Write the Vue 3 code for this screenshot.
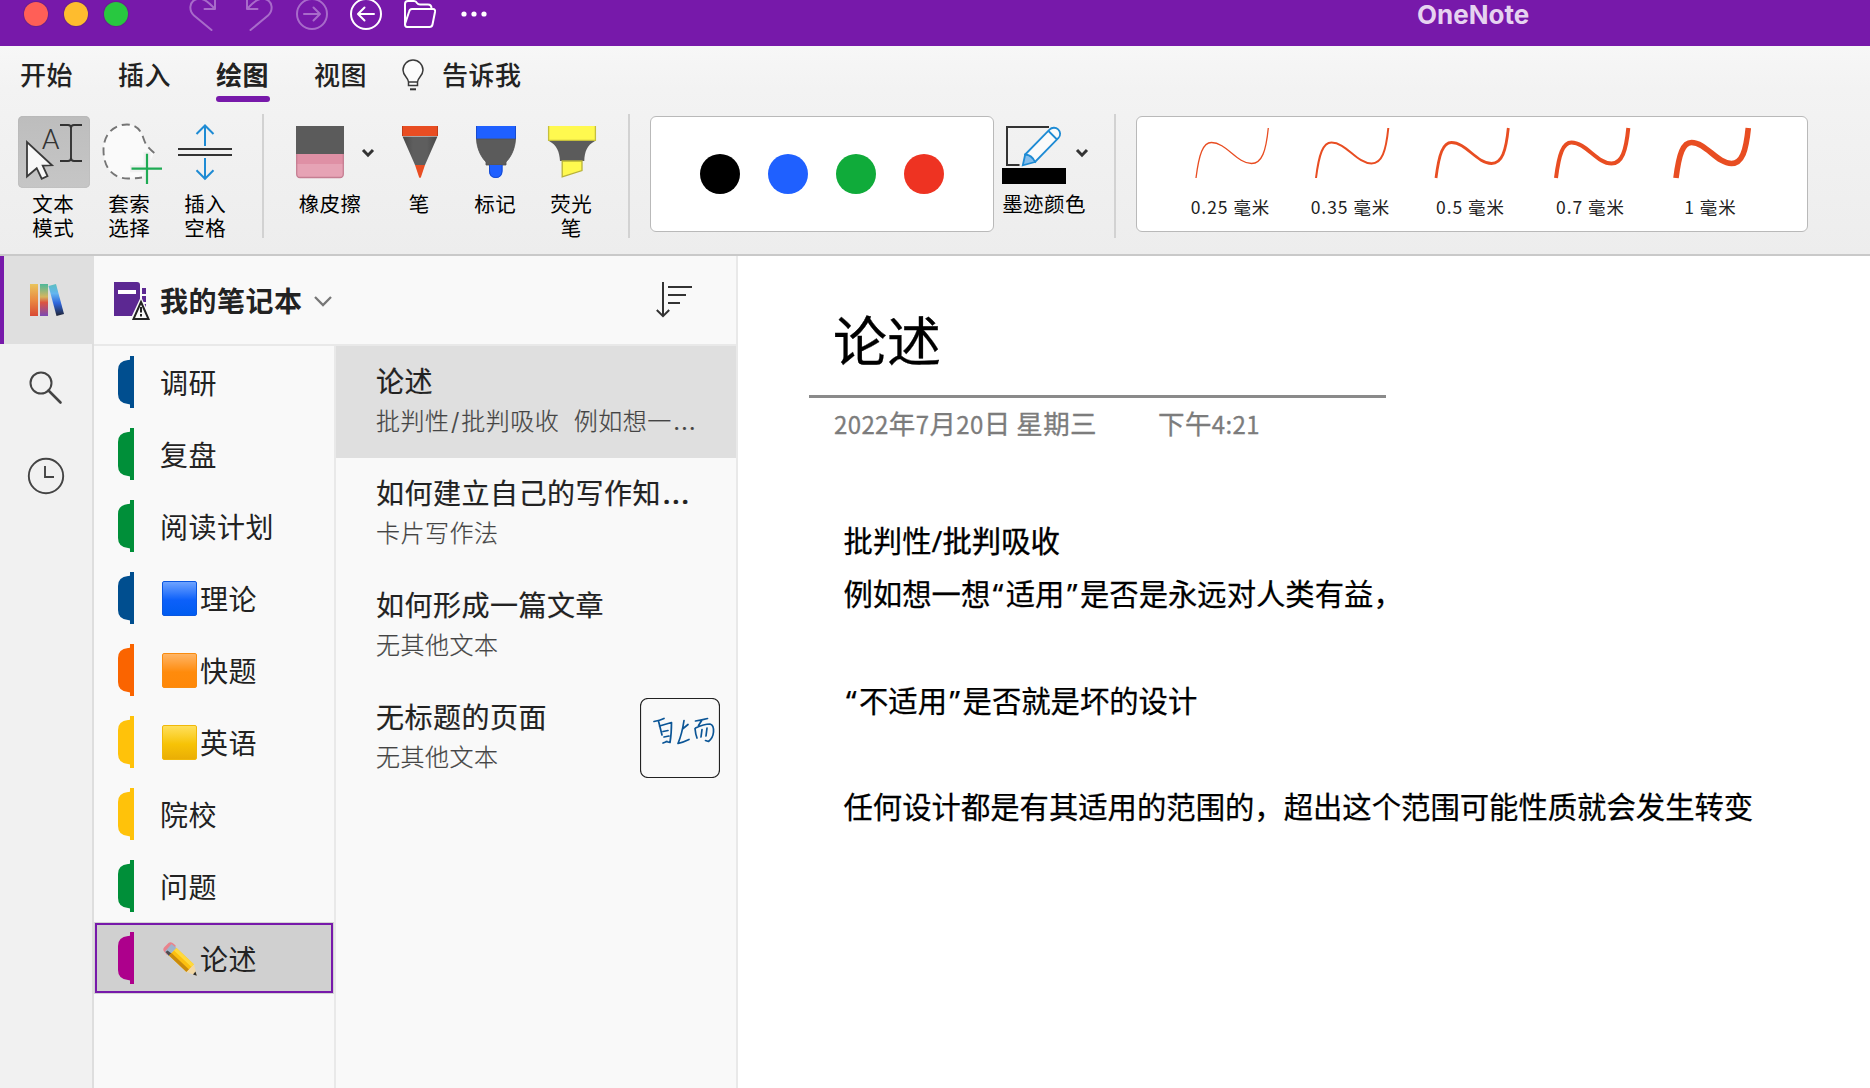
<script setup>
const tabs = ['开始', '插入', '绘图', '视图']
const activeTab = '绘图'

const inks = ['#000000', '#1f60ff', '#10ab3a', '#ee3322']

const strokes = [
  { label: '0.25 毫米', width: 1.3 },
  { label: '0.35 毫米', width: 2 },
  { label: '0.5 毫米', width: 2.8 },
  { label: '0.7 毫米', width: 4 },
  { label: '1 毫米', width: 5.6 },
]

const sections = [
  { name: '调研', color: '#004e8f' },
  { name: '复盘', color: '#008f39' },
  { name: '阅读计划', color: '#008f39' },
  { name: '理论', color: '#004e8f', square: 'blue' },
  { name: '快题', color: '#fa6400', square: 'orange' },
  { name: '英语', color: '#ffc20a', square: 'yellow' },
  { name: '院校', color: '#ffc20a' },
  { name: '问题', color: '#008f39' },
  { name: '论述', color: '#ad008c', pencil: true, active: true },
]

const pages = [
  { title: '论述', text: '批判性/批判吸收\u00a0 例如想一…', active: true },
  { title: '如何建立自己的写作知…', text: '卡片写作法' },
  { title: '如何形成一篇文章', text: '无其他文本' },
  { title: '无标题的页面', text: '无其他文本', thumb: true },
]

// Splits a line so that slashes and ellipses can be spaced on their own.
const parts = (s) => s.split(/([/…])/).filter(Boolean)
const markClass = (s) => ({ slash: s === '/', dots3: s === '…' })
</script>

<template>
  <div class="app">
    <header class="titlebar">
      <i class="light red"></i><i class="light amber"></i><i class="light green"></i>
      <svg class="redo dim" width="32" height="46" viewBox="186 0 32 46">
        <path d="M211.500 30L194 15.500C188.500 10.500 189.500 2 195.500 -.500C202 -3 207 .500 215 9M215 -4V9H204.500" />
      </svg>
      <svg class="undo dim" width="32" height="46" viewBox="244 0 32 46">
        <path d="M250.500 30L268 15.500C273.500 10.500 272.500 2 266.500 -.500C260 -3 255 .500 247 9M247 -4V9H257.500" />
      </svg>
      <svg class="fwd dim" width="32" height="46" viewBox="296 0 32 46">
        <circle cx="312" cy="14" r="15" /><path d="M304 14H319M313.500 7.500L320 14L313.500 20.500" />
      </svg>
      <svg class="back" width="32" height="46" viewBox="350 0 32 46">
        <circle cx="366" cy="14" r="15" /><path d="M374 14H359M364.500 7.500L358 14L364.500 20.500" />
      </svg>
      <svg class="folder" width="36" height="46" viewBox="402 0 36 46">
        <path d="M405 25V4Q405 1 408 1H414Q416 1 417 3Q418 4.500 420 4.500H428Q431.500 4.500 431.500 8.500M407 27Q405 27 405 24L409 12Q409.500 9 412 9H433Q435.500 9 435 12L432.500 24.500Q432 27 429.500 27Z" />
      </svg>
      <svg class="dots" width="28" height="46" viewBox="460 0 28 46">
        <circle cx="464" cy="14" r="2.600" /><circle cx="474" cy="14" r="2.600" /><circle cx="484" cy="14" r="2.600" />
      </svg>
      <span class="app-name">OneNote</span>
    </header>

    <div class="ribbon">
      <nav class="tabs">
        <span v-for="t in tabs" :key="t" class="tab" :class="{ on: t === activeTab }">{{ t }}</span>
        <svg class="bulb" width="24" height="34" viewBox="0 0 24 34">
          <path d="M7.500 23C7.500 18.500 2 17 2 11A10 10 0 0 1 22 11C22 17 16.500 18.500 16.500 23V26.500H7.500ZM7.500 23H16.500" fill="#fcfcfc" stroke="#3a3a3a" stroke-width="1.500" />
          <path d="M9 30.300H15" stroke="#333" stroke-width="2" />
        </svg>
        <span class="tab tell">告诉我</span>
      </nav>

      <div class="tools">
        <div class="tool pressed">
          <svg width="72" height="72" viewBox="0 0 72 72">
            <path d="M9 26V60.500L18.700 52.200L23.700 62.700L29.500 60L24.700 49.700L34 49.300Z" fill="#f8f8f8" stroke="#3a3a3a" stroke-width="1.800" />
            <text x="32.700" y="33" text-anchor="middle" class="glyph-a">A</text>
            <path d="M42 9H50Q53 9 53 12Q53 9 56 9H64M42 45H50Q53 45 53 42Q53 45 56 45H64M53 10V44" fill="none" stroke="#333" stroke-width="1.900" />
          </svg>
          <span class="label">文本<br />模式</span>
        </div>
        <div class="tool">
          <svg width="72" height="72" viewBox="0 0 72 72">
            <path d="M60.300 37C52 30 51 27 49 21C46 12 40 8.500 33 8.500C18 8.500 9.500 20 9.500 34C9.500 52 19 62.500 34 62.500Q41 62.500 48 61.500" fill="#fafafa" stroke="#757575" stroke-width="1.900" stroke-dasharray="8 5" />
            <path d="M53 36V70M36 52.700H70" stroke="#f0f0f0" stroke-width="7" />
            <path d="M53 37.700V68M37.500 52.700H68" stroke="#1fab54" stroke-width="2.200" />
          </svg>
          <span class="label">套索<br />选择</span>
        </div>
        <div class="tool">
          <svg width="72" height="72" viewBox="0 0 72 72" fill="none">
            <path d="M8 33H62M8 39H62" stroke="#333" stroke-width="2" />
            <path d="M35 30V9M26.500 18L35 9.500L43.500 18M35 42V63M26.500 54.300L35 62.800L43.500 54.300" stroke="#1e8bd4" stroke-width="2" />
          </svg>
          <span class="label">插入<br />空格</span>
        </div>
        <i class="sep first"></i>

        <div class="tool eraser">
          <div class="pair">
            <svg width="48" height="72" viewBox="0 0 48 72">
              <path d="M0 10H48V38H0Z" fill="#5b5b5b" />
              <path d="M.700 38H47.300V58Q47.300 61.500 44 61.500H4Q.700 61.500 .700 58Z" fill="#e6a3b5" />
              <path d="M0 38H48V48H0Z" fill="#df90a5" />
              <path d="M.700 38V58Q.700 61.500 4 61.500H44Q47.300 61.500 47.300 58V38" fill="none" stroke="#c57e92" stroke-width="1.300" />
            </svg>
            <svg class="chev" width="14" height="10" viewBox="0 0 14 10"><path d="M2 2L7 7.200L12 2" /></svg>
          </div>
          <span class="label">橡皮擦</span>
        </div>
        <div class="tool pen">
          <svg width="72" height="72" viewBox="0 0 72 72">
            <defs>
              <linearGradient id="cone"><stop offset="0" stop-color="#474747" /><stop offset=".3" stop-color="#5e5e5e" /><stop offset=".7" stop-color="#5e5e5e" /><stop offset="1" stop-color="#474747" /></linearGradient>
            </defs>
            <path d="M18 10H54V20H18Z" fill="#e84d22" /><path d="M18.500 10V20M53.500 10V20" stroke="#c23d18" />
            <path d="M18.500 20.500H53.500L41 49H31Z" fill="url(#cone)" />
            <path d="M31 49H41L37 61Q36 63 35 61Z" fill="#e84d22" />
          </svg>
          <span class="label">笔</span>
        </div>
        <div class="tool">
          <svg width="72" height="72" viewBox="0 0 72 72">
            <path d="M16 10H56V23H16Z" fill="#1f60ff" /><path d="M16.500 10V23M55.500 10V23" stroke="#174bd0" />
            <path d="M16.500 23H55.500C55 34 50 42 46 46V49H26V46C22 42 17 34 16.500 23Z" fill="#5b5b5b" stroke="#505050" stroke-width=".8" />
            <path d="M29 49H42.500V55Q42.500 62 35.800 62Q29 62 29 55Z" fill="#1f60ff" /><path d="M29.500 49V55Q30 61.500 35.800 61.500Q41.500 61.500 42 55V49" fill="none" stroke="#174bd0" />
          </svg>
          <span class="label">标记</span>
        </div>
        <div class="tool">
          <svg width="72" height="72" viewBox="0 0 72 72">
            <path d="M12 10H60V25H12Z" fill="#fff94f" /><path d="M12.600 10V24.400H59.400V10" fill="none" stroke="#c5bf3c" stroke-width="1.300" />
            <path d="M13 25H59C51 29 48.500 36 48.300 45H24C23.500 36 21 29 13 25Z" fill="#5b5b5b" />
            <path d="M26.200 45H46V54.500L26.200 60.800Z" fill="#fff94f" stroke="#b8b238" stroke-width="1.300" />
          </svg>
          <span class="label">荧光<br />笔</span>
        </div>
        <i class="sep first"></i>

        <div class="box inks">
          <i v-for="c in inks" :key="c" class="ink" :style="{ background: c }"></i>
        </div>
        <div class="tool inkcolor">
          <div class="pair">
            <svg width="68" height="72" viewBox="0 0 68 72">
              <path d="M49 11H7V49H19.500" fill="none" stroke="#333" stroke-width="2" />
              <path d="M25.200 38.500L49.500 13.700A5.500 5.500 0 0 1 58.500 22L35 46Z" fill="#fafafa" stroke="#1e8bd4" stroke-width="1.800" />
              <path d="M22.800 49.300L25.200 38.500Q32 39 35 46Z" fill="#83bdeb" stroke="#1e8bd4" stroke-width="1.800" />
              <path d="M48.500 15L57 23.500" stroke="#1e8bd4" stroke-width="1.800" />
              <path d="M2 52H66V68H2Z" fill="#000" />
            </svg>
            <svg class="chev" width="14" height="10" viewBox="0 0 14 10"><path d="M2 2L7 7.200L12 2" /></svg>
          </div>
          <span class="label">墨迹颜色</span>
        </div>
        <i class="sep second"></i>

        <div class="box widths">
          <div v-for="s in strokes" :key="s.label" class="width">
            <svg width="120" height="72" viewBox="0 0 120 72">
              <path d="M26 62C29 38 33 26.500 41.500 26.500C56 26.500 67 47.500 81.500 47.500C92 47.500 96 35 98.300 12" fill="none" stroke="#e84d22" :stroke-width="s.width" />
            </svg>
            <span>{{ s.label }}</span>
          </div>
        </div>
      </div>
    </div>

    <div class="main">
      <aside class="rail">
        <div class="rail-item on">
          <svg width="34" height="34" viewBox="0 0 34 34">
            <defs>
              <linearGradient id="b1" x1="0" y1="0" x2="0" y2="1"><stop offset="0" stop-color="#e9c45c" /><stop offset=".5" stop-color="#ea8a42" /><stop offset="1" stop-color="#d94a35" /></linearGradient>
              <linearGradient id="b2" x1="0" y1="0" x2="0" y2="1"><stop offset="0" stop-color="#4db89a" /><stop offset=".4" stop-color="#d5b65e" /><stop offset=".58" stop-color="#dc5340" /><stop offset="1" stop-color="#7a49b5" /></linearGradient>
              <linearGradient id="b3" x1="0" y1="0" x2="0" y2="1"><stop offset="0" stop-color="#5cbfc0" /><stop offset=".3" stop-color="#63b5f0" /><stop offset=".6" stop-color="#2f66dd" /><stop offset="1" stop-color="#202333" /></linearGradient>
            </defs>
            <path d="M0 1H8V33H0Z" fill="url(#b1)" /><path d="M10 1H18V33H10Z" fill="url(#b2)" />
            <path d="M18.500 3L26 1L34 31L26.500 33Z" fill="url(#b3)" />
          </svg>
        </div>
        <div class="rail-item">
          <svg width="34" height="34" viewBox="0 0 34 34" fill="none" stroke="#444">
            <circle cx="12" cy="12" r="10.500" stroke-width="2" /><path d="M19.500 19.500L31.500 31.500" stroke-width="2.600" stroke-linecap="round" />
          </svg>
        </div>
        <div class="rail-item">
          <svg width="38" height="38" viewBox="0 0 38 38" fill="none" stroke="#444" stroke-width="1.900">
            <circle cx="19" cy="19" r="17.200" /><path d="M18 9V20H27" />
          </svg>
        </div>
      </aside>

      <div class="nav">
        <div class="nav-head">
          <svg width="38" height="40" viewBox="0 0 38 40">
            <path d="M0 0H23Q26 0 26 3V34H0Z" fill="#5c2892" /><path d="M4 8H22V12H4Z" fill="#fff" />
            <path d="M28 6H32V12H28ZM28 14H32V20H28ZM28 22H32V28H28Z" fill="#5c2892" />
            <path d="M27 14.500L38.500 39H15.500Z" fill="#f9f9f9" />
            <path d="M27 20L34.500 37H19.500Z" fill="#f9f9f9" stroke="#222" stroke-width="2" />
            <path d="M27 25V30.500M27 32V34.500" stroke="#222" stroke-width="2" />
          </svg>
          <span class="book">我的笔记本</span>
          <svg class="down" width="20" height="14" viewBox="0 0 20 14"><path d="M2 3L10 11L18 3" fill="none" stroke="#777" stroke-width="2.300" /></svg>
          <svg class="sort" width="38" height="38" viewBox="0 0 38 38" fill="none" stroke="#333" stroke-width="2">
            <path d="M7 1V35M.800 29L7 35.200L13.200 29M12 6H36M12 14H30M12 22H24" />
          </svg>
        </div>
        <div class="cols">
          <div class="sections">
            <div v-for="s in sections" :key="s.name" class="section" :class="{ on: s.active }">
              <svg width="16" height="52" viewBox="0 0 16 52" :fill="s.color">
                <path d="M12 0H16V52H12V48.500Q11.500 48 10 48Q0 47 0 38V14Q0 5 10 4Q11.500 4 12 3.500Z" />
              </svg>
              <span class="sec-name">
                <i v-if="s.square" class="square" :class="s.square"></i>
                <svg v-if="s.pencil" class="pencil" width="35" height="35" viewBox="0 0 35 35">
                  <path d="M2.500 6L6.500 2Q9 0 12 3L14 5L5 14L2.500 11Q0 8.500 2.500 6Z" fill="#e9838c" />
                  <path d="M9.500 3L14.500 7L7 14.500L3 10.500Z" fill="#9fb4cb" />
                  <path d="M3.500 11L5.500 9.500L9.500 12.500L7 15Z" fill="#4c4c50" />
                  <path d="M7 14.500L14.500 7L32 23.500L24.500 31Z" fill="#fcc010" />
                  <path d="M7 14.500L9.500 12L27 28.500L24.500 31Z" fill="#c98a0c" />
                  <path d="M12 9.500L14.500 7L32 23.500L29.500 26Z" fill="#ffd93c" />
                  <path d="M24.500 31L32 23.500L34.800 34.800Z" fill="#f2d8a4" /><path d="M31 33.500L33.500 30.500L34.800 34.800Z" fill="#2b2b2b" />
                </svg>{{ s.name }}</span>
            </div>
          </div>
          <div class="pages">
            <div v-for="p in pages" :key="p.title" class="page" :class="{ on: p.active }">
              <div class="page-text">
                <div class="page-title"><span v-for="(s, i) in parts(p.title)" :key="i" :class="markClass(s)">{{ s }}</span></div>
                <div class="page-sub"><span v-for="(s, i) in parts(p.text)" :key="i" :class="markClass(s)">{{ s }}</span></div>
              </div>
              <svg v-if="p.thumb" class="thumb" width="80" height="80" viewBox="0 0 80 80" fill="none">
                <rect x=".5" y=".5" width="79" height="79" rx="7.500" stroke="#222" stroke-width="1.200" />
                <g stroke="#0b5596" stroke-width="1.700" stroke-linecap="round" stroke-linejoin="round">
                  <path d="M14 23.500Q20 22.500 24 20.500M18.500 23L22 37M19.500 28L31.500 24.500Q31.500 36 30 44.500L26 43.500M23 33.500L28 32.500M24 39L29 38M23 45L27 43.500" />
                  <path d="M44 22.500Q42 36 38 45.500Q44 44 49 41.500M42.500 31L48 26.500" />
                  <path d="M55.500 23Q62 22 67.500 20.500M62 22L58.500 27.500M55 30.500Q55.500 36 57 40M55.500 30Q64 26 70 26Q74 27 73.500 34Q73 40 68.500 43.500L65.500 42.500M62 31.500L61 39M67 30L66 38" />
                </g>
              </svg>
            </div>
          </div>
        </div>
      </div>

      <main class="note">
        <h1>论述</h1>
        <div class="meta">
          <span class="date"><b>2022</b>年<b>7</b>月<b>20</b>日<b>&nbsp;</b>星期三</span>
          <span>下午<b>4:21</b></span>
        </div>
        <div class="body">
          <p>批判性/<em>批判吸收</em></p>
          <p>例如想一想<q>“</q>适用<q>”</q>是否是永远对人类有益，</p>
          <p>&nbsp;</p>
          <p><q>“</q>不适用<q>”</q>是否就是坏的设计</p>
          <p>&nbsp;</p>
          <p>任何设计都是有其适用的范围的，超出这个范围可能性质就会发生转变</p>
        </div>
      </main>
    </div>
  </div>
</template>

<style>
html, body { margin: 0; overflow: hidden; }
</style>

<style scoped>
.app {
  width: 1870px; height: 1088px; display: flex; flex-direction: column; overflow: hidden;
  background: #fff; color: #222; font-family: Inter, "Noto Sans CJK SC", sans-serif;
}
svg { display: block; flex: none; }
.titlebar { height: 46px; flex: none; display: flex; background: #7719aa; padding-left: 24px; }
.titlebar svg { fill: none; stroke: #fff; stroke-width: 2; stroke-linejoin: round; stroke-linecap: round; }
.titlebar svg.dim { stroke: #a86bca; }
.titlebar svg.dots { fill: #fff; stroke: none; }
.light { width: 24px; height: 24px; border-radius: 50%; margin: 2px 16px 0 0; box-shadow: 0 0 0 1px #6a1f8f; }
.red { background: #ff5f57; }
.amber { background: #febc2e; }
.green { background: #28c840; }
.redo { margin-left: 42px; }
.undo { margin-left: 26px; }
.fwd { margin-left: 20px; }
.back { margin-left: 22px; }
.folder { margin-left: 20px; }
.dots { margin-left: 22px; }
.app-name { margin-left: 929px; font-size: 26px; font-weight: 700; line-height: 30px; color: #e6d3f0; }

.ribbon { height: 208px; flex: none; background: linear-gradient(#f7f7f7, #f3f3f3 20%, #ededed); border-bottom: 2px solid #c9c9c9; }
.tabs { height: 62px; display: flex; padding-left: 20px; }
.tab { width: 54px; margin-right: 44px; font: 500 26px/56px "Noto Sans CJK SC", sans-serif; height: 56px; white-space: nowrap; letter-spacing: .5px; color: #222; }
.tab.on { font-weight: 700; display: flex; flex-direction: column; }
.tab.on::after { content: ""; height: 6px; border-radius: 3px; background: #7719aa; margin-top: -6px; flex: none; }
.bulb { margin: 13px 0 0 -11px; }
.tell { margin-left: 17px; width: auto; }

.tools { display: flex; padding: 8px 0 0 18px; align-items: flex-start; }
.tool { width: 72px; margin-right: 4px; display: flex; flex-direction: column; align-items: center; }
.pressed svg { background: linear-gradient(#bdbdbd, #c6c6c6); border-radius: 5px; box-shadow: inset 0 0 1px #999; }
.glyph-a { font: 300 28.500px Roboto, sans-serif; fill: #333; }
.label { font: 400 20.500px/24px "Noto Sans CJK SC", sans-serif; letter-spacing: .4px; margin: 3px 1.600px 0 0; text-align: center; color: #000; white-space: nowrap; }
.sep { width: 2px; height: 124px; margin-top: -2px; background: #d2d2d2; }
.sep.first { margin-left: 16px; }
.pair { display: flex; align-items: center; align-self: flex-start; }
.chev { fill: none; stroke: #333; stroke-width: 3; margin-top: 2px; }
.eraser { width: 88px; margin-left: 24px; margin-right: 8px; }
.eraser .pair { padding-left: 8px; gap: 17px; }
.eraser .label { margin-right: 4px; }
.box { height: 114px; border: 1px solid #b9b9b9; border-radius: 6px; background: #fff; display: flex; }
.inks { width: 342px; margin-left: 20px; align-items: center; justify-content: center; gap: 28px; }
.ink { width: 40px; height: 40px; border-radius: 50%; }
.inkcolor { width: 88px; margin: 0 26px 0 6px; }
.inkcolor .pair { gap: 7px; }
.inkcolor .label { margin-right: 0; }
.widths { margin-left: 20px; box-sizing: border-box; width: 672px; height: 116px; padding-left: 33px; }
.width { width: 120px; margin-top: -1px; display: flex; flex-direction: column; align-items: center; }
.width span { font: 400 17.500px/24px "Noto Sans CJK SC", sans-serif; letter-spacing: .95px; margin: 7px -1px 0 0; color: #222; }

.main { flex: 1; display: flex; min-height: 0; }
.rail { width: 94px; box-sizing: border-box; border-right: 2px solid #dedede; background: #f1f1f1; }
.rail-item { width: 92px; height: 88px; display: flex; align-items: center; justify-content: center; }
.rail-item.on { width: 94px; box-sizing: border-box; background: #dfdfdf; border-left: 4px solid #7719aa; }
.rail-item.on svg { margin-right: 4px; }
.nav { width: 642px; border-right: 2px solid #e9e9e9; background: #f9f9f9; display: flex; flex-direction: column; }
.nav-head { height: 88px; flex: none; border-bottom: 2px solid #e9e9e9; display: flex; align-items: center; padding-left: 20px; }
.nav-head > svg:first-child { margin-top: 4px; }
.book { margin-left: 8px; font: 700 28px/40px "Noto Sans CJK SC", sans-serif; letter-spacing: .5px; }
.down { margin: 1px 0 0 10px; }
.sort { margin: 0 42px 0 auto; }
.cols { flex: 1; display: flex; }
.sections { width: 240px; border-right: 2px solid #e9e9e9; }
.section { height: 72px; box-sizing: border-box; padding-left: 24px; display: flex; align-items: center; }
.section.on { height: 70px; margin: 1px; padding-left: 21px; background: #d0d0d0; border: 2px solid #7719aa; box-shadow: 0 0 0 1px #d4d4d4; }
.sec-name { margin-left: 26px; font: 400 28px/40px "Noto Sans CJK SC", sans-serif; letter-spacing: .5px; display: flex; align-items: center; }
.square { width: 33px; height: 33px; margin: 0 3px 0 2px; border-radius: 2px; border: 1px solid; }
.blue { border-color: #0a56e0; background: linear-gradient(#6ea3ff, #0c60fa 55%, #005cf0); }
.orange { border-color: #f98c10; background: linear-gradient(#ffb566, #ff8b0c 55%, #ff8808); }
.yellow { border-color: #f0b80a; background: linear-gradient(#ffe05c, #f7c306 55%, #eaae05); }
.pencil { margin: 0 3px 0 2px; }
.pages { width: 400px; }
.page { height: 112px; box-sizing: border-box; display: flex; justify-content: space-between; padding: 16px 16px 0 40px; }
.page.on { background: #dfdfdf; }
.page-title { font: 400 28px/41px Inter, "Noto Sans CJK SC", sans-serif; letter-spacing: .5px; white-space: nowrap; -webkit-text-stroke: .2px #222; }
.page-sub { font: 300 24px/38px Inter, "Noto Sans CJK SC", sans-serif; letter-spacing: .5px; color: #444; white-space: nowrap; -webkit-text-stroke: .2px #444; }
.slash { margin: 0 1.500px; }
.dots3 { font-size: 1.150em; line-height: 1; margin-left: 1px; }

.note { flex: 1; color: #000; font-family: "Noto Sans", "Noto Sans CJK SC", sans-serif; }
h1 { margin: 0 0 0 71px; width: 553px; height: 139px; padding-left: 24px; border-bottom: 3px solid #8a8a8a; font: 400 54px/166px "Noto Sans CJK SC", sans-serif; -webkit-text-stroke: .3px #000; }
.meta { display: flex; margin: 5px 0 0 96px; gap: 61px; font: 400 26.500px/40px "Noto Sans CJK SC", sans-serif; letter-spacing: .38px; color: #7c7c7c; -webkit-text-stroke: .3px #7c7c7c; }
.meta b { font-weight: 400; font-size: 24px; }
.body { margin: 71px 0 0 105.500px; }
p { margin: 0; font-size: 29.350px; line-height: 53.300px; height: 53.300px; white-space: nowrap; -webkit-text-stroke: .25px #000; }
em { font-style: normal; -webkit-text-stroke: .4px #000; }
q { quotes: none; display: inline-block; width: 15.500px; text-align: center; }
q::before, q::after { content: none; }
</style>
